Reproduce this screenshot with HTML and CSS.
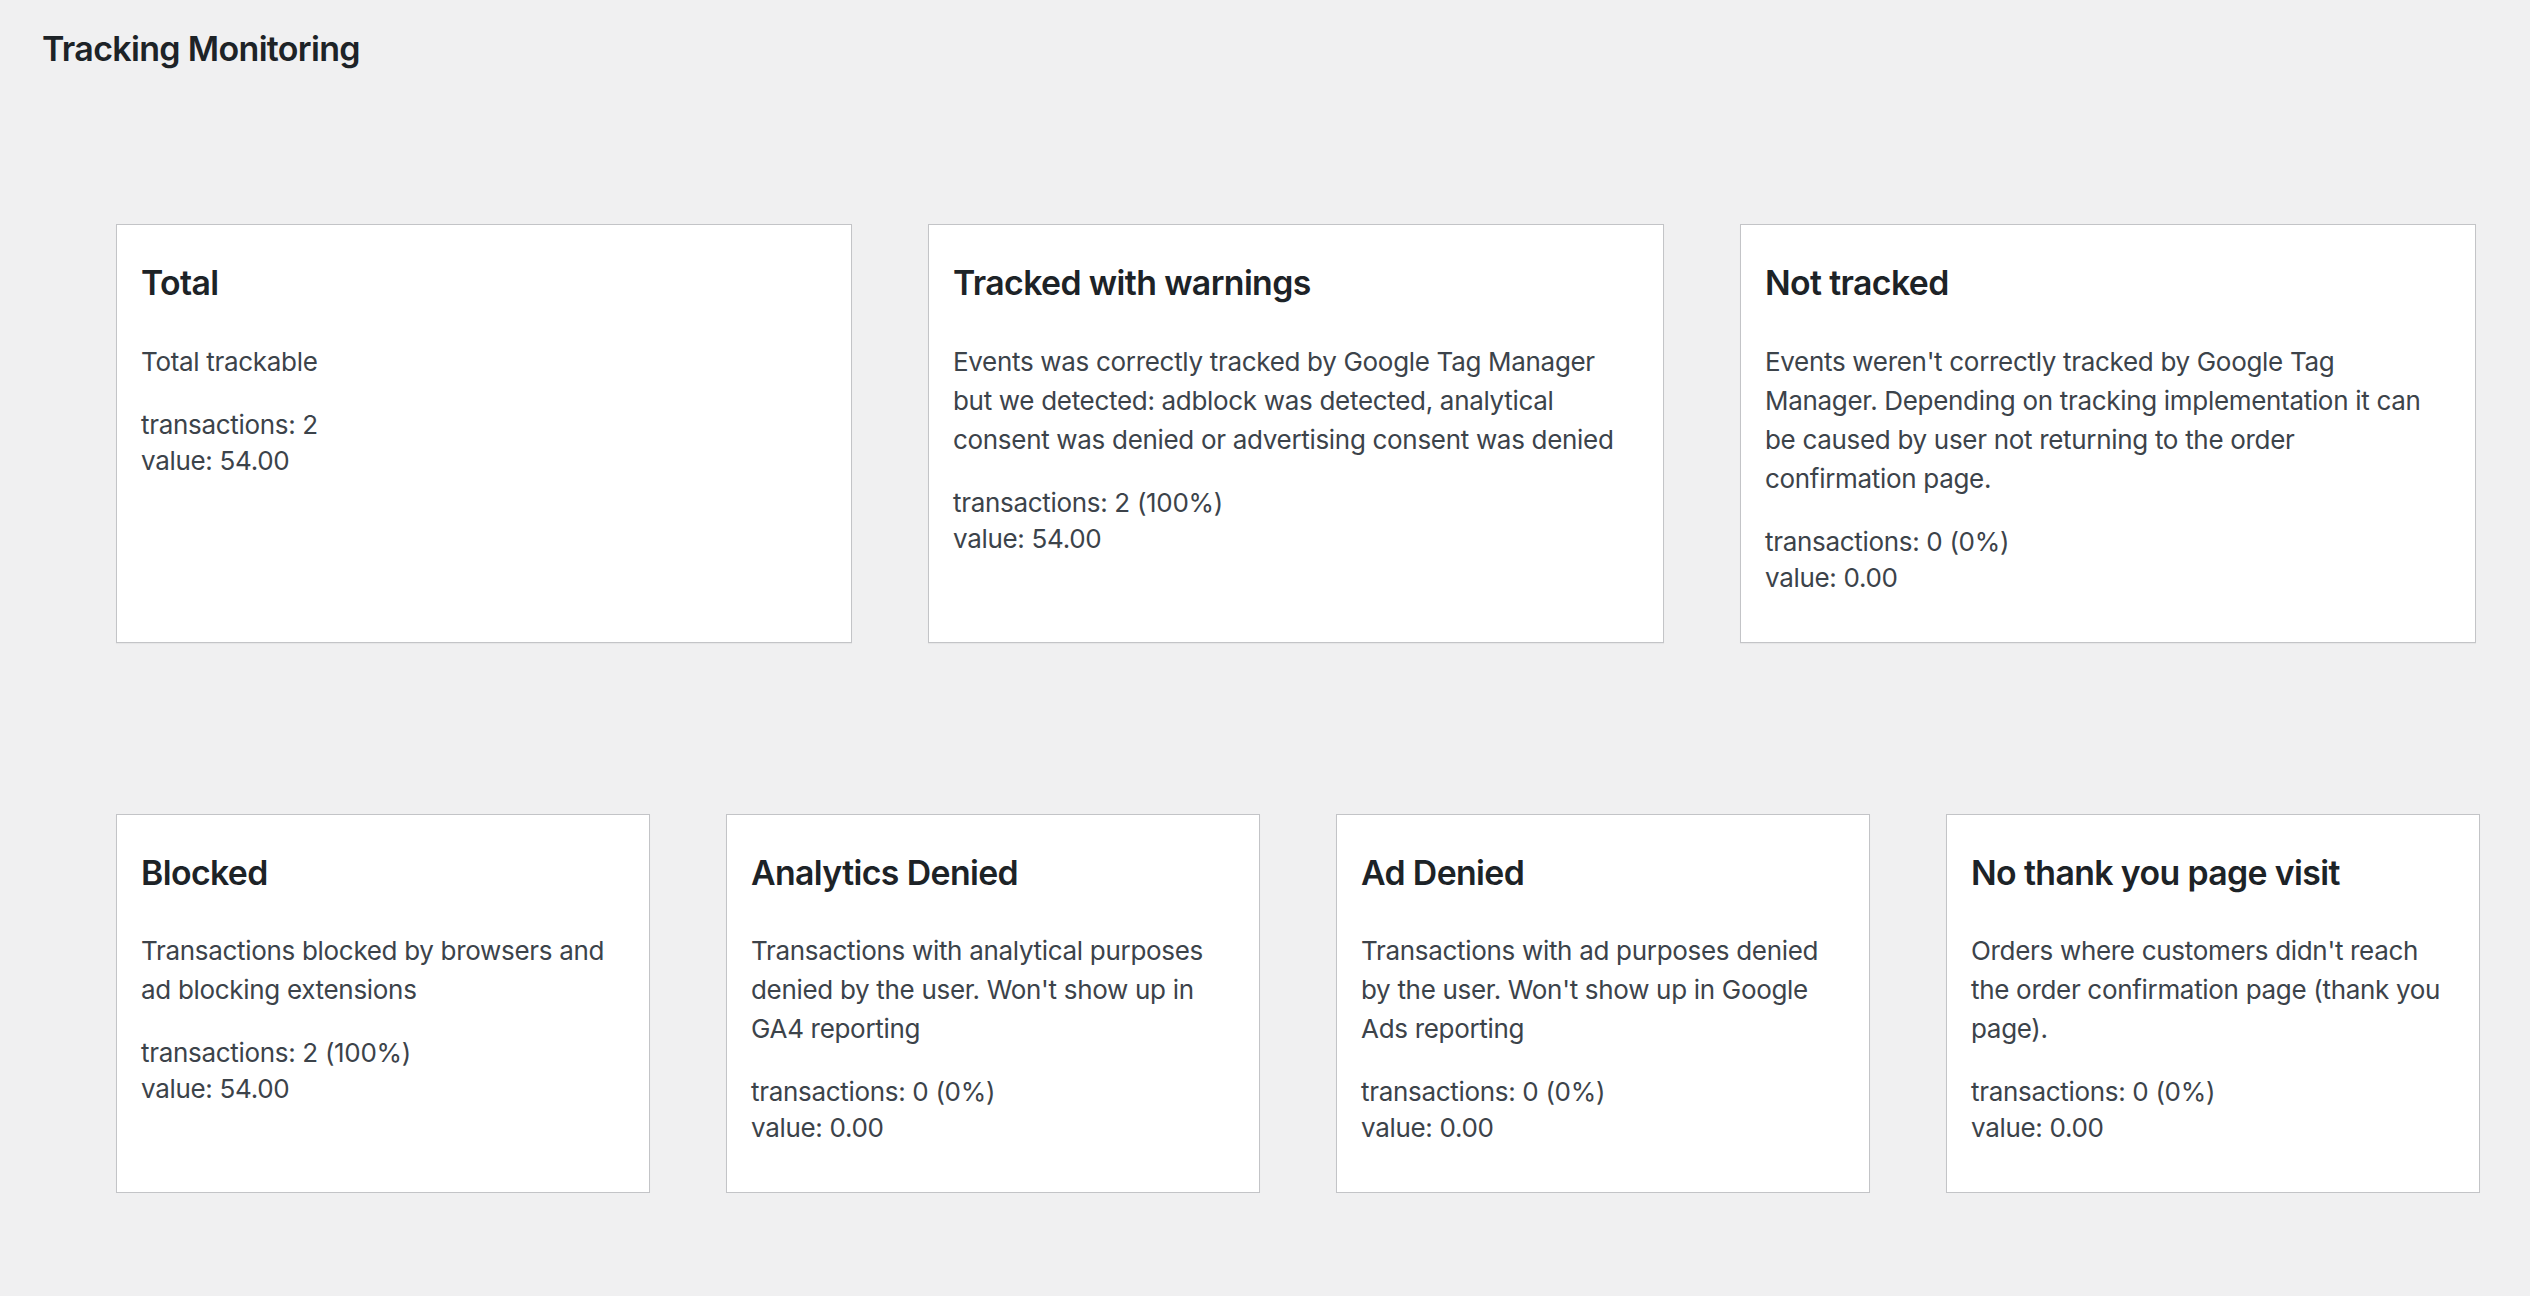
FILE: index.html
```html
<!DOCTYPE html>
<html lang="en">
<head>
<meta charset="utf-8">
<title>Tracking Monitoring</title>
<link rel="stylesheet" href="styles.css">
</head>
<body>
<div class="wrap">
  <h1 class="page-title">Tracking Monitoring</h1>

  <div class="grid grid-3">
    <div class="card">
      <h2 class="card-title">Total</h2>
      <p class="card-desc">Total trackable</p>
      <div class="card-stats">transactions: 2<br>value: 54.00</div>
    </div>
    <div class="card">
      <h2 class="card-title">Tracked with warnings</h2>
      <p class="card-desc">Events was correctly tracked by Google Tag Manager but we detected: adblock was detected, analytical consent was denied or advertising consent was denied</p>
      <div class="card-stats">transactions: 2 (100%)<br>value: 54.00</div>
    </div>
    <div class="card">
      <h2 class="card-title">Not tracked</h2>
      <p class="card-desc">Events weren't correctly tracked by Google Tag Manager. Depending on tracking implementation it can be caused by user not returning to the order confirmation page.</p>
      <div class="card-stats">transactions: 0 (0%)<br>value: 0.00</div>
    </div>
  </div>

  <div class="grid grid-4">
    <div class="card">
      <h2 class="card-title">Blocked</h2>
      <p class="card-desc">Transactions blocked by browsers and ad blocking extensions</p>
      <div class="card-stats">transactions: 2 (100%)<br>value: 54.00</div>
    </div>
    <div class="card">
      <h2 class="card-title">Analytics Denied</h2>
      <p class="card-desc">Transactions with analytical purposes denied by the user. Won't show up in GA4 reporting</p>
      <div class="card-stats">transactions: 0 (0%)<br>value: 0.00</div>
    </div>
    <div class="card">
      <h2 class="card-title">Ad Denied</h2>
      <p class="card-desc">Transactions with ad purposes denied by the user. Won't show up in Google Ads reporting</p>
      <div class="card-stats">transactions: 0 (0%)<br>value: 0.00</div>
    </div>
    <div class="card">
      <h2 class="card-title">No thank you page visit</h2>
      <p class="card-desc">Orders where customers didn't reach the order confirmation page (thank you page).</p>
      <div class="card-stats">transactions: 0 (0%)<br>value: 0.00</div>
    </div>
  </div>
</div>
</body>
</html>
```

FILE: styles.css
```css
html, body {
  margin: 0;
  padding: 0;
  background: #f0f0f1;
}

body {
  font-family: Inter, "Noto Sans", "Liberation Sans", sans-serif;
  color: #3c434a;
  font-size: 26px;
  line-height: 36.4px;
  letter-spacing: -0.012em;
}

.wrap {
  padding: 31px 0 0 42px;
}

.page-title {
  margin: 0;
  font-size: 34px;
  line-height: 36.4px;
  font-weight: 600;
  letter-spacing: -0.02em;
  color: #1d2327;
}

.grid {
  display: grid;
  column-gap: 76px;
  margin-left: 74px;
}

.grid-3 {
  grid-template-columns: repeat(3, 736px);
  margin-top: 157px;
}

.grid-4 {
  grid-template-columns: repeat(4, 534px);
  margin-top: 171px;
}

.card {
  background: #fff;
  border: 1px solid #c3c4c7;
  box-shadow: 0 1px 1px rgba(0, 0, 0, 0.04);
  padding: 40px 30px 45px 24px;
}

.card-title {
  margin: 0 0 40px;
  font-size: 33.8px;
  line-height: 36.4px;
  font-weight: 600;
  letter-spacing: -0.018em;
  color: #1d2327;
}

.card-desc {
  margin: 0 0 26px;
  font-size: 26px;
  line-height: 39px;
}

.card-stats {
  font-size: 26px;
  line-height: 36.4px;
}
```
